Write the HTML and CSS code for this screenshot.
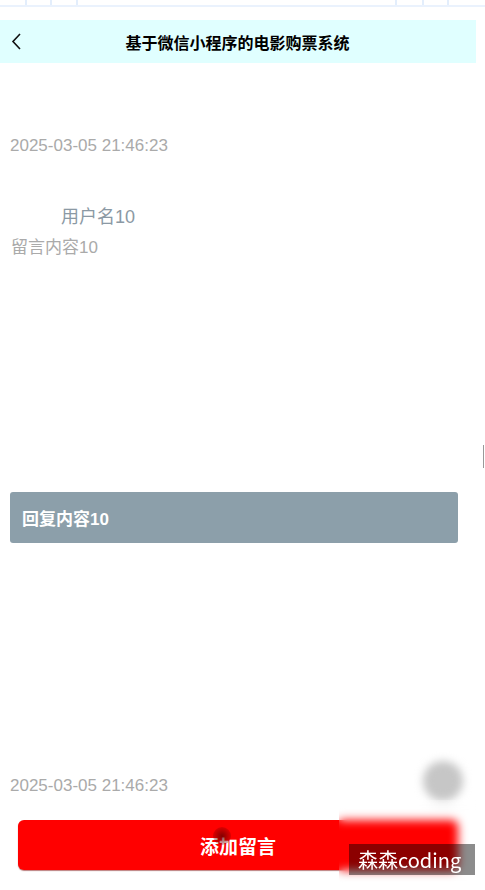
FILE: index.html
```html
<!DOCTYPE html>
<html lang="zh">
<head>
<meta charset="utf-8">
<title>留言详情</title>
<link rel="stylesheet" href="styles.css">
</head>
<body>
<div class="page">
  <div class="topstrip"></div>
  <div class="header">
    <svg class="back" width="16" height="20" viewBox="0 0 16 20"><polyline points="9,2 2,9.5 9,17" fill="none" stroke="#111" stroke-width="1.6"/></svg>
    <div class="title">基于微信小程序的电影购票系统</div>
  </div>
  <div class="content">
    <div class="date first">2025-03-05 21:46:23</div>
    <div class="user">用户名10</div>
    <div class="msg">留言内容10</div>
    <div class="reply">回复内容10</div>
    <div class="date second">2025-03-05 21:46:23</div>
    <div class="btn">添加留言</div>
  </div>
  <div class="touch"></div>
  <div class="float-ball"></div>
  <div class="blur-zone"></div>
  <div class="watermark">森森coding</div>
  <div class="scroll-ind"></div>
</div>
</body>
</html>
```
FILE: styles.css
```css
html, body {
  margin: 0;
  padding: 0;
  background: #fff;
}
.page {
  position: relative;
  width: 485px;
  height: 890px;
  overflow: hidden;
  font-family: "Liberation Sans", "Noto Sans CJK SC", sans-serif;
}
.topstrip {
  height: 5px;
  border-bottom: 2px solid #eaf2fd;
  background:
    linear-gradient(#e3eefc, #e3eefc) 25px 0 / 2px 5px no-repeat,
    linear-gradient(#e3eefc, #e3eefc) 50px 0 / 2px 5px no-repeat,
    linear-gradient(#e3eefc, #e3eefc) 76px 0 / 2px 5px no-repeat,
    linear-gradient(#e3eefc, #e3eefc) 395px 0 / 2px 5px no-repeat,
    linear-gradient(#e3eefc, #e3eefc) 422px 0 / 2px 5px no-repeat,
    linear-gradient(#e3eefc, #e3eefc) 447px 0 / 2px 5px no-repeat;
}
.header {
  margin-top: 13px;
  width: 476px;
  height: 43px;
  background: #e0ffff;
  display: flex;
  align-items: center;
  position: relative;
}
.back {
  margin-left: 11px;
}
.title {
  position: absolute;
  left: 0;
  right: 0;
  text-align: center;
  font-size: 16px;
  font-weight: bold;
  color: #000;
  padding-right: 1px;
  pointer-events: none;
}
.content {
  padding: 0 10px;
}
.date {
  font-size: 17px;
  line-height: 20px;
  color: #aaaaaa;
}
.date.first {
  margin-top: 73px;
}
.user {
  margin-top: 49px;
  padding-left: 51px;
  font-size: 18px;
  line-height: 24px;
  color: #8b99a4;
}
.msg {
  margin-top: 8px;
  padding-left: 1px;
  font-size: 17px;
  line-height: 22px;
  color: #aaaaaa;
}
.reply {
  margin-top: 233px;
  width: 436px;
  height: 51px;
  padding-left: 12px;
  background: #8c9faa;
  border-radius: 3px;
  display: flex;
  align-items: center;
  color: #fff;
  font-size: 17px;
  font-weight: bold;
}
.date.second {
  margin-top: 233px;
}
.btn {
  margin-top: 24px;
  margin-left: 8px;
  width: 440px;
  height: 50px;
  background: #ff0000;
  border-radius: 6px;
  box-shadow: 0 1px 1px rgba(120, 0, 0, 0.5);
  display: flex;
  align-items: center;
  justify-content: center;
  color: #fff;
  font-size: 19px;
  font-weight: bold;
}
.touch {
  position: absolute;
  left: 213px;
  top: 827px;
  width: 18px;
  height: 18px;
  border-radius: 50%;
  background: radial-gradient(circle, rgba(90, 0, 0, 0.75) 0%, rgba(120, 0, 0, 0.4) 55%, rgba(160, 0, 0, 0) 100%);
}
.float-ball {
  position: absolute;
  left: 423px;
  top: 761px;
  width: 40px;
  height: 40px;
  border-radius: 50%;
  background: #c6c6c6;
  filter: blur(4px);
}
.blur-zone {
  position: absolute;
  left: 339px;
  top: 800px;
  width: 146px;
  height: 90px;
  backdrop-filter: blur(5px);
  -webkit-backdrop-filter: blur(5px);
}
.watermark {
  position: absolute;
  left: 349px;
  top: 844px;
  width: 126px;
  height: 31px;
  background: rgba(0, 0, 0, 0.45);
  color: #fff;
  font-family: "Noto Sans CJK SC", "Open Sans", sans-serif;
  font-size: 20px;
  line-height: 31px;
  padding-left: 9px;
  box-sizing: border-box;
  white-space: nowrap;
  overflow: hidden;
}
.scroll-ind {
  position: absolute;
  left: 483px;
  top: 445px;
  width: 1px;
  height: 23px;
  background: #999;
}
```
